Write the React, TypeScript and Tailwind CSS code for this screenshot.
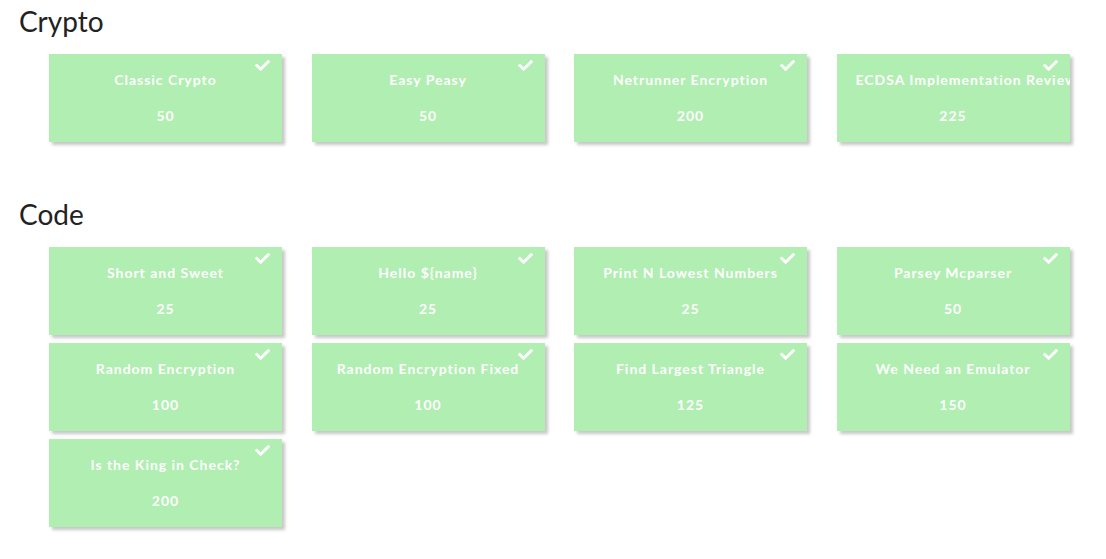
import React from "react";

const CheckIcon = () => (
  <svg viewBox="0 0 512 512" width="15" height="15" className="absolute top-[4px] right-[12px]" fill="#ffffff">
    <path d="M173.898 439.404l-166.4-166.4c-9.997-9.997-9.997-26.206 0-36.204l36.203-36.204c9.997-9.998 26.207-9.998 36.204 0L192 312.69 432.095 72.596c9.997-9.997 26.207-9.997 36.204 0l36.203 36.204c9.997 9.997 9.997 26.206 0 36.204l-294.4 294.401c-9.998 9.997-26.207 9.997-36.204-.001z" />
  </svg>
);

type Ch = { title: string; points: number };

const sections: { name: string; items: Ch[] }[] = [
  {
    name: "Crypto",
    items: [
      { title: "Classic Crypto", points: 50 },
      { title: "Easy Peasy", points: 50 },
      { title: "Netrunner Encryption", points: 200 },
      { title: "ECDSA Implementation Review", points: 225 },
    ],
  },
  {
    name: "Code",
    items: [
      { title: "Short and Sweet", points: 25 },
      { title: "Hello ${name}", points: 25 },
      { title: "Print N Lowest Numbers", points: 25 },
      { title: "Parsey Mcparser", points: 50 },
      { title: "Random Encryption", points: 100 },
      { title: "Random Encryption Fixed", points: 100 },
      { title: "Find Largest Triangle", points: 125 },
      { title: "We Need an Emulator", points: 150 },
      { title: "Is the King in Check?", points: 200 },
    ],
  },
];

const Card = ({ c }: { c: Ch }) => (
  <div className="relative w-[233px] h-[88px] bg-[#b0eeb1] shadow-[3px_3px_3px_rgba(0,0,0,0.22)] overflow-hidden text-white font-bold text-[14px] tracking-[0.07em] text-center">
    <CheckIcon />
    <div className="px-[19px] pt-[17px] leading-[18px] whitespace-nowrap overflow-hidden text-clip">
      <span className="inline-block">{c.title}</span>
    </div>
    <div className="pt-[18px] leading-[18px]">{c.points}</div>
  </div>
);

export default function App() {
  return (
    <div className="bg-white min-h-[559px] w-[1106px] pt-[4px] pl-[19px] text-[#222222]" style={{ fontFamily: "Lato, 'Open Sans', sans-serif" }}>
      {sections.map((s, i) => (
        <div key={s.name} className={i > 0 ? "mt-[55px]" : ""}>
          <h2 className="text-[28px] leading-[34px] font-normal">{s.name}</h2>
          <div className="mt-[16px] ml-[30px] grid grid-cols-[repeat(4,233px)] gap-x-[29.5px] gap-y-[8px]">
            {s.items.map((c) => (
              <Card key={c.title} c={c} />
            ))}
          </div>
        </div>
      ))}
    </div>
  );
}
